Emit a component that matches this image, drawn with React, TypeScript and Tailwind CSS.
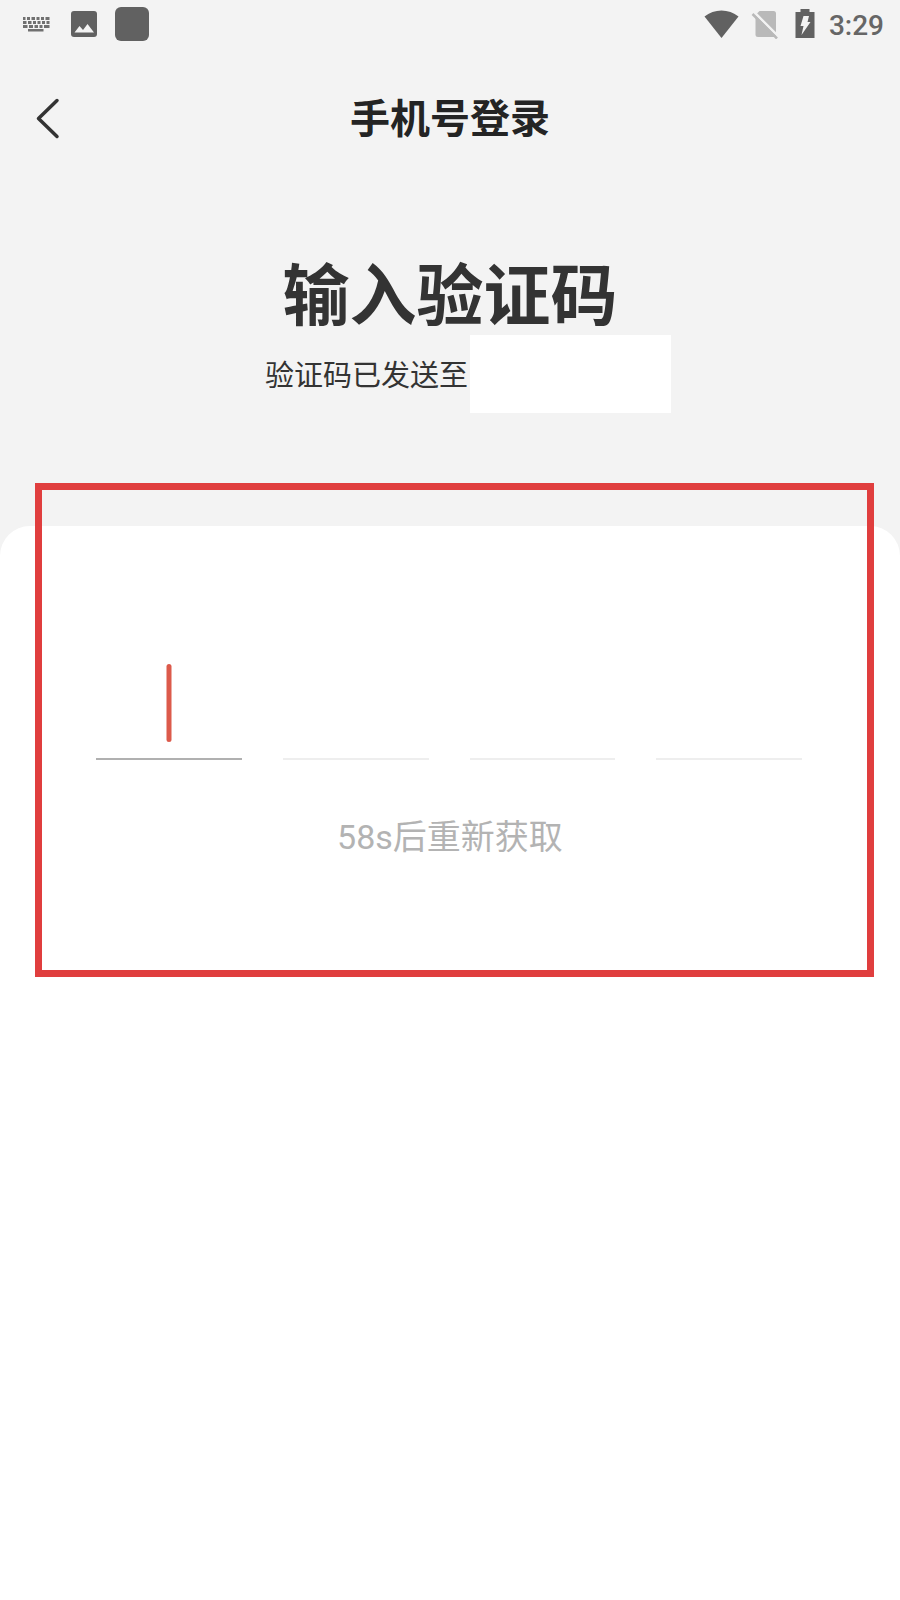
import { useState } from "react";

const CODE_LENGTH = 4;

function StatusBar() {
  return (
    <div className="flex h-12 items-center justify-between pl-[22px] pr-4">
      <div className="flex items-center">
        <svg width="28" height="16" viewBox="0 0 28 16" fill="#707070">
          <path d="M1 1h2.5v3H1zM5 1h3v3H5zM9.5 1h3.5v3H9.5zM14.5 1h3v3h-3zM19 1h3v3h-3zM23.5 1h4v3h-4z" />
          <path d="M1 5h3.5v3H1zM6 5h3.5v3H6zM11 5h3v3h-3zM15.5 5h3v3h-3zM20 5h3v3h-3zM24.5 5h3v3h-3z" />
          <path d="M1 9h4.5v3H1zM7 9h4v3H7zM12.5 9h3.5v3h-3.5zM17.5 9h3v3h-3zM22 9h5.5v3H22zM6 13h15.5v2.5H6z" />
        </svg>
        <svg className="ml-[21px]" width="26" height="26" viewBox="0 0 26 26">
          <rect width="26" height="26" rx="3" fill="#616161" />
          <path d="M3.5 21.5l5-6.5 3.5 4 4.5-6 6.5 8.500z" fill="#f3f3f3" />
        </svg>
        <span className="ml-[18px] size-[34px] rounded-md bg-[#616161]" />
      </div>
      <div className="flex items-center">
        <svg width="35" height="28" viewBox="0 0 35 28">
          <path d="M0.5 6.5C10-1.5 25-1.5 34.5 6.500L17.500 28z" fill="#616161" />
        </svg>
        <svg className="ml-3" width="28" height="30" viewBox="0 0 28 30">
          <path d="M8.5 2H22.500Q25 2 25 4.500V26.500Q25 28 23 28H7Q4.500 28 4.500 25.500V6z" fill="#b9b9b9" />
          <path d="M3 3L28 28" stroke="#f3f3f3" strokeWidth="2.5" />
          <path d="M1.5 5L26 29.500" stroke="#b9b9b9" strokeWidth="2.5" />
        </svg>
        <svg className="ml-4" width="20" height="30" viewBox="0 0 20 30">
          <path d="M5.5 0h9v3h5v26h-19V3h5z" fill="#616161" />
          <path d="M8.5 7h5.500l-1.500 6H15.500L6.500 26l2-9H5.500z" fill="#f3f3f3" />
        </svg>
        <span className="ml-[14px] pt-1 font-[Roboto] text-[28px] leading-8 font-medium text-[#666]">3:29</span>
      </div>
    </div>
  );
}

export default function App() {
  const [code, setCode] = useState<string[]>(Array(CODE_LENGTH).fill(""));

  const handleChange = (index: number, value: string) => {
    setCode(code.map((digit, i) => (i === index ? value.replace(/\D/g, "") : digit)));
  };

  return (
    <div className="flex min-h-screen flex-col bg-[#f3f3f3] font-[Roboto,'Noto_Sans_CJK_SC',sans-serif] text-[#333]">
      <StatusBar />

      <header className="grid h-[142px] grid-cols-[96px_1fr_96px] items-center">
        <button type="button" aria-label="返回" className="flex h-20 items-center pl-9">
          <svg width="24" height="42" viewBox="0 0 24 42" fill="none" stroke="#333" strokeWidth="3.5" strokeLinecap="round" strokeLinejoin="round">
            <path d="M21 2.5L2.5 20.5L21 38.5" />
          </svg>
        </button>
        <h1 className="pt-0.5 text-center text-[40px] leading-[60px] font-bold text-[#242424]">手机号登录</h1>
      </header>

      <section className="flex flex-col items-center pt-[57px] pb-32">
        <h2 className="text-[67px] leading-[100px] font-bold">输入验证码</h2>
        <p className="mt-2 flex text-[29px] leading-[43px]">
          验证码已发送至
          {/* masked phone number */}
          <span className="relative w-[167px]">
            <span className="absolute -top-5 left-[2px] h-[78px] w-[201px] bg-white" />
          </span>
        </p>
      </section>

      <main className="relative flex flex-1 flex-col rounded-t-[30px] bg-white">
        <form className="flex flex-col pt-[127px]">
          <div className="flex gap-[41px] pr-[98px] pl-24">
            {code.map((digit, i) => (
              <div key={i} className="relative flex-1">
                <input
                  aria-label={`验证码 ${i + 1}`}
                  inputMode="numeric"
                  maxLength={1}
                  value={digit}
                  onChange={(e) => handleChange(i, e.target.value)}
                  className={`h-[107px] w-full border-b-2 bg-transparent text-center text-5xl caret-transparent outline-none ${
                    i === 0 ? "border-[#b0b0b0]" : "border-[#eee]"
                  }`}
                />
                {i === 0 && !digit && (
                  <span className="absolute top-[11px] left-1/2 h-[78px] w-[5px] -translate-x-1/2 rounded-full bg-[#dc5a4b]" />
                )}
              </div>
            ))}
          </div>
          <button type="button" disabled className="mt-[52px] self-center text-[34px] leading-[50px] text-[#b3b3b3]">
            58s后重新获取
          </button>
        </form>

        {/* highlight frame */}
        <div className="pointer-events-none absolute -top-[43px] right-[26px] left-[35px] h-[494px] border-7 border-[#e03e3e]" />
      </main>
    </div>
  );
}
